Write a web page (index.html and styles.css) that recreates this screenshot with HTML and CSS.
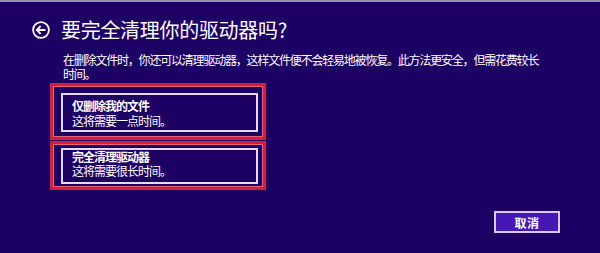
FILE: index.html
```html
<!DOCTYPE html>
<html>
<head>
  <meta charset="UTF-8" />
  <title>要完全清理你的驱动器吗？</title>
  <link rel="stylesheet" href="styles.css">
</head>
<body>
  <div class="topline"></div>
  <div class="page">
    <div class="header">
      <svg class="back" width="18" height="18" viewBox="0 0 18 18">
        <circle cx="9" cy="9" r="7.9" fill="none" stroke="#fff" stroke-width="1.8"/>
        <path d="M4.8 9 H13.4 M8.6 5.1 L4.8 9 L8.6 12.9" fill="none" stroke="#fff" stroke-width="1.9"/>
      </svg>
      <h1>要完全清理你的驱动器吗?</h1>
    </div>

    <p class="desc"><span class="line">在删除文件时，你还可以清理驱动器，这样文件便不会轻易地被恢复。此方法更安全，但需花费较长</span><br>时间。</p>

    <div class="mark first">
      <div class="option">
        <div class="opt-title">仅删除我的文件</div>
        <div class="opt-sub">这将需要一点时间。</div>
      </div>
    </div>

    <div class="mark second">
      <div class="option">
        <div class="opt-title">完全清理驱动器</div>
        <div class="opt-sub">这将需要很长时间。</div>
      </div>
    </div>

    <div class="footer">
      <button class="cancel">取消</button>
    </div>
  </div>
</body>
</html>
```

FILE: styles.css
```css
body {
  margin: 0;
  background: #1d0063;
  color: #fff;
  font-family: "Noto Sans CJK SC", "Noto Sans", sans-serif;
  height: 253px;
  overflow: hidden;
}
.topline {
  height: 2px;
  background: #9896aa;
}
.page {
  padding: 17px 0 0 32px;
}
.header {
  display: flex;
  align-items: center;
  height: 22px;
  gap: 11px;
}
.back {
  display: block;
  flex: none;
}
h1 {
  margin: 0;
  font-size: 20px;
  font-weight: normal;
  line-height: 22px;
  letter-spacing: -0.3px;
}
.desc {
  margin: 12px 0 0 31px;
  font-size: 12px;
  line-height: 14px;
  letter-spacing: -1.2px;
}
.desc .line {
  white-space: nowrap;
}
.mark {
  width: 197px;
  margin-left: 18px;
  border: 3px solid #d0203c;
  box-shadow: inset 0 0 0 1px #e8607e;
}
.mark.first {
  margin-top: 2px;
  padding: 7px 5px 5px 8px;
}
.mark.second {
  margin-top: 1px;
  padding: 4px 5px 3px 8px;
}
.option {
  border: 2px solid #e4dcf4;
  padding: 0 0 2px 9px;
  font-size: 12px;
  letter-spacing: -1px;
}
.first .option {
  padding-top: 3px;
  line-height: 15px;
}
.second .option {
  padding-bottom: 4px;
  line-height: 14px;
}
.opt-title {
  font-weight: bold;
}
.footer {
  display: flex;
  justify-content: flex-end;
  padding-right: 40px;
  margin-top: 21px;
}
.cancel {
  width: 66px;
  height: 22px;
  padding: 0;
  background: #4717b6;
  color: #fff;
  border: 2px solid #d8ccf2;
  font-family: "Noto Sans CJK SC", sans-serif;
  font-size: 12px;
  font-weight: bold;
  letter-spacing: 0.5px;
}
```
